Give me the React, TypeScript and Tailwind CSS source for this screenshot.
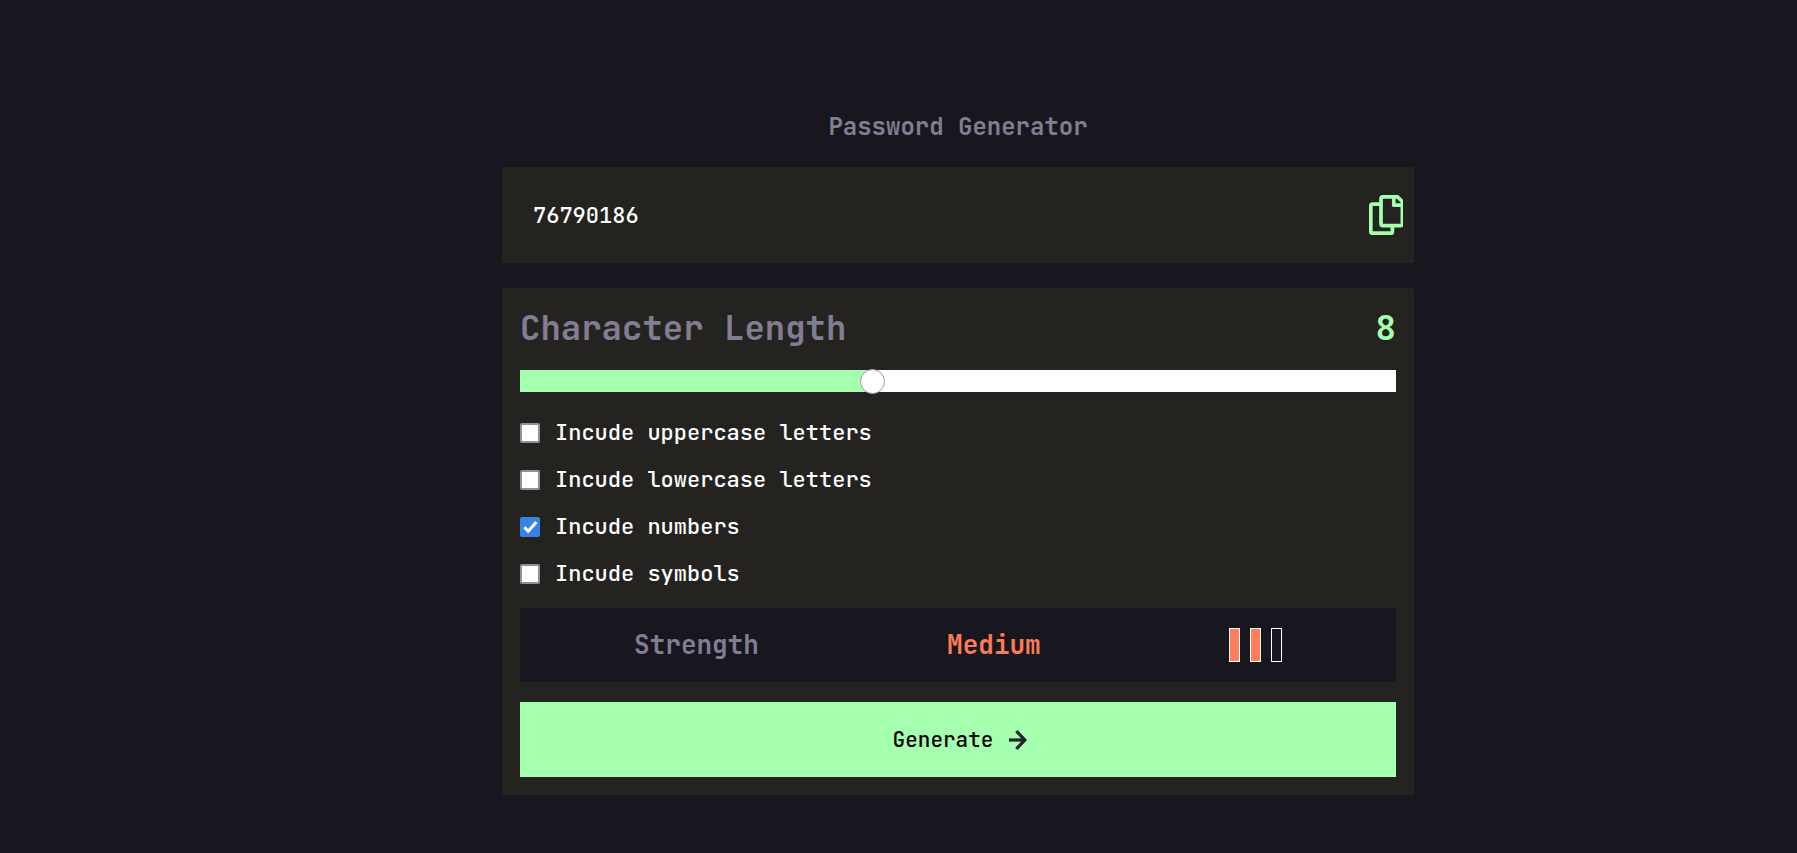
import { useState } from "react";

const OPTIONS = [
  { id: "uppercase", label: "Incude uppercase letters", chars: "ABCDEFGHIJKLMNOPQRSTUVWXYZ" },
  { id: "lowercase", label: "Incude lowercase letters", chars: "abcdefghijklmnopqrstuvwxyz" },
  { id: "numbers", label: "Incude numbers", chars: "0123456789" },
  { id: "symbols", label: "Incude symbols", chars: "!@#$%^&*()" },
];

const MAX_LENGTH = 20;

function CopyIcon() {
  return (
    <svg width="34" height="40" viewBox="0 0 34 40" fill="none" stroke="currentColor" strokeWidth="3.7" strokeLinejoin="round" aria-hidden="true">
      <path d="M11 9.2H3.6A1.8 1.8 0 0 0 1.8 11V36.4A1.8 1.8 0 0 0 3.6 38.2H21.6A1.8 1.8 0 0 0 23.4 36.4V31" />
      <path d="M33.4 6.8 28.4 1.8H13.8A1.8 1.8 0 0 0 12 3.6V28.8A1.8 1.8 0 0 0 13.8 30.6H31.6A1.8 1.8 0 0 0 33.4 28.8Z" />
      <path d="M24.8 2V10.2H33.4" />
    </svg>
  );
}

function ArrowIcon() {
  return (
    <svg width="18" height="20" viewBox="0 0 18 20" fill="none" stroke="#24232c" strokeWidth="3.2" aria-hidden="true">
      <path d="M0 10H15.6" />
      <path d="M7.4 1.2 15.8 10 7.4 18.8" />
    </svg>
  );
}

export default function App() {
  const [length, setLength] = useState(8);
  const [password, setPassword] = useState("76790186");
  const [selected, setSelected] = useState<string[]>(["numbers"]);

  const toggle = (id: string) =>
    setSelected((current) => (current.includes(id) ? current.filter((item) => item !== id) : [...current, id]));

  const generate = () => {
    const pool = OPTIONS.filter((option) => selected.includes(option.id)).map((option) => option.chars).join("");
    if (!pool) return;
    setPassword(Array.from({ length }, () => pool[Math.floor(Math.random() * pool.length)]).join(""));
  };

  const level = length < 6 ? 1 : length < 12 ? 2 : 3;
  const strength = ["Weak", "Medium", "Strong"][level - 1];
  const ratio = length / MAX_LENGTH;

  return (
    <div className="min-h-screen bg-[#18171f] pt-[109px] pb-14 pl-[119px] font-['JetBrains_Mono','DejaVu_Sans_Mono',monospace] font-medium text-white">
      <main className="mx-auto max-w-[912px]">
        <h1 className="mb-[22px] text-center text-[24px] leading-9 font-semibold text-[#817d92]">Password Generator</h1>

        <section className="mb-[25px] flex h-24 items-center justify-between rounded-xs bg-[#24231f] pr-[11px] pl-[31px]">
          <output className="text-[22px] leading-[33px]">{password}</output>
          <button type="button" aria-label="Copy password" className="text-[#a4ffaf]" onClick={() => navigator.clipboard?.writeText(password)}>
            <CopyIcon />
          </button>
        </section>

        <section className="rounded-xs bg-[#24231f] px-[18px] pt-[18px] pb-[18px]">
          <div className="flex items-center justify-between text-[34px] leading-11 font-semibold">
            <label htmlFor="length" className="text-[#817d92]">Character Length</label>
            <span className="text-[#a4ffaf]">{length}</span>
          </div>

          <input
            id="length"
            type="range"
            min={0}
            max={MAX_LENGTH}
            value={length}
            onChange={(event) => setLength(Number(event.target.value))}
            style={{
              background: `linear-gradient(to right, #a4ffaf calc(12px + (100% - 25px) * ${ratio}), #ffffff calc(12px + (100% - 25px) * ${ratio}))`,
            }}
            className="mt-5 block h-[22px] w-full appearance-none [&::-webkit-slider-thumb]:size-[25px] [&::-webkit-slider-thumb]:appearance-none [&::-webkit-slider-thumb]:rounded-full [&::-webkit-slider-thumb]:border [&::-webkit-slider-thumb]:border-[#9a9a9a] [&::-webkit-slider-thumb]:bg-white"
          />

          <div className="mt-[25px] flex flex-col gap-[15px]">
            {OPTIONS.map(({ id, label }) => (
              <div key={id} className="flex items-center gap-[15px]">
                <span className="relative flex size-5">
                  <input
                    id={id}
                    type="checkbox"
                    checked={selected.includes(id)}
                    onChange={() => toggle(id)}
                    className="peer size-5 appearance-none rounded-xs border-2 border-[#8f8f9d] bg-white checked:border-[#3584e4] checked:bg-[#3584e4]"
                  />
                  <svg className="pointer-events-none absolute inset-0 hidden peer-checked:block" width="20" height="20" viewBox="0 0 20 20" fill="none" stroke="white" strokeWidth="3" aria-hidden="true">
                    <path d="M4.4 10.2 8.2 14.2 16.4 5" />
                  </svg>
                </span>
                <label htmlFor={id} className="text-[22px] leading-8">{label}</label>
              </div>
            ))}
          </div>

          <div className="mt-[18px] flex h-[74px] items-center justify-around bg-[#18171f] px-5 text-[26px] leading-9 font-semibold">
            <span className="text-[#817d92]">Strength</span>
            <span className="text-[#fb7c58]">{strength}</span>
            <div className="flex gap-[10px]">
              {[1, 2, 3].map((bar) => (
                <span key={bar} className={bar <= level ? "h-[34px] w-[11px] border border-white bg-[#ff7f5c]" : "h-[34px] w-[11px] border border-white"} />
              ))}
            </div>
          </div>

          <button type="button" onClick={generate} className="mt-5 flex h-[75px] w-full items-center justify-center gap-4 bg-[#a4ffaf] pl-1 text-[21px] text-black">
            Generate
            <ArrowIcon />
          </button>
        </section>
      </main>
    </div>
  );
}
